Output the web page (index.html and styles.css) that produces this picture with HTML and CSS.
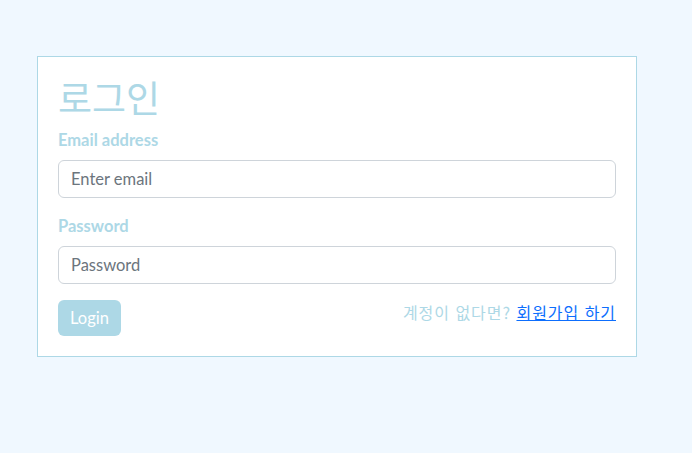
FILE: index.html
```html
<!DOCTYPE html>
<html lang="ko">
<head>
<meta charset="utf-8">
<title>로그인</title>
<link rel="stylesheet" href="styles.css">
</head>
<body>
<main class="page">
  <form class="card">
    <h1 class="title">로그인</h1>
    <div class="field">
      <label class="label" for="email">Email address</label>
      <input class="input" id="email" type="email" placeholder="Enter email">
    </div>
    <div class="field">
      <label class="label" for="pw">Password</label>
      <input class="input" id="pw" type="password" placeholder="Password">
    </div>
    <div class="actions">
      <button class="btn" type="button">Login</button>
      <p class="signup">계정이 없다면? <a class="link" href="#">회원가입 하기</a></p>
    </div>
  </form>
</main>
</body>
</html>
```
FILE: styles.css
```css
* { box-sizing: border-box; }
html, body { margin: 0; padding: 0; }
body {
  background: #f0f8ff;
  font-family: Lato, "Noto Sans CJK KR", sans-serif;
  font-size: 16.5px;
  line-height: 24px;
  color: #212529;
  min-height: 453px;
}
.page {
  padding: 56px 0 0 37px;
}
.card {
  width: 600px;
  background: #fff;
  border: 1px solid #add8e6;
  padding: 20px;
  display: flex;
  flex-direction: column;
}
.title {
  margin: 0;
  font-family: "Noto Sans CJK KR", sans-serif;
  font-weight: 400;
  font-size: 37px;
  line-height: 40px;
  height: 51px;
  color: #add8e6;
}
.field {
  display: flex;
  flex-direction: column;
  margin-bottom: 16px;
}
.label {
  font-weight: 700;
  color: #add8e6;
  margin-bottom: 8px;
  line-height: 24px;
}
.input {
  height: 38px;
  padding: 6px 12px;
  font: inherit;
  color: #212529;
  border: 1px solid #ced4da;
  border-radius: 6px;
  background: #fff;
}
.input::placeholder { color: #6c757d; }
.actions {
  display: flex;
  justify-content: space-between;
  align-items: flex-start;
}
.btn {
  height: 36px;
  padding: 0 12px;
  font: inherit;
  color: #fff;
  background: #add8e6;
  border: 0;
  border-radius: 6px;
}
.signup {
  margin: 0;
  font-family: "Noto Sans CJK KR", sans-serif;
  font-size: 16px;
  line-height: 24px;
  color: #add8e6;
  letter-spacing: 0.06em;
}
.link { color: #0d6efd; }
```
